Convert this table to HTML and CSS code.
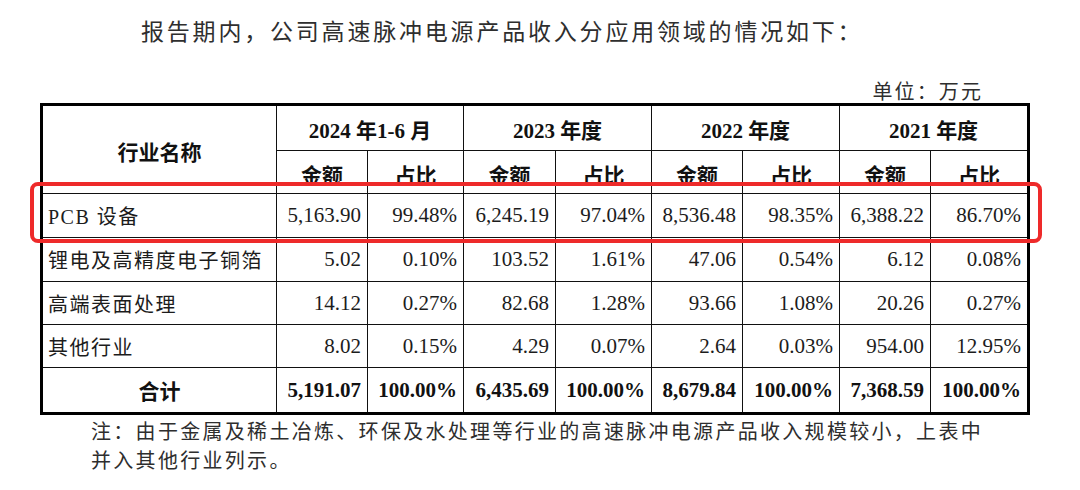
FILE: index.html
```html
<!DOCTYPE html>
<html lang="zh-CN">
<head>
<meta charset="utf-8">
<title>高速脉冲电源产品收入分应用领域</title>
<link rel="stylesheet" href="styles.css">
</head>
<body>
<div class="page">
  <p class="lead">报告期内，公司高速脉冲电源产品收入分应用领域的情况如下：</p>
  <div class="sheet">
    <p class="unit">单位：万元</p>
    <table class="data">
      <colgroup>
        <col class="c-name">
        <col class="c-91"><col class="c-96">
        <col class="c-92"><col class="c-96">
        <col class="c-91"><col class="c-97">
        <col class="c-91"><col class="c-96">
      </colgroup>
      <thead>
        <tr class="h1">
          <th rowspan="2">行业名称</th>
          <th colspan="2">2024 年1-6 月</th>
          <th colspan="2">2023 年度</th>
          <th colspan="2">2022 年度</th>
          <th colspan="2">2021 年度</th>
        </tr>
        <tr class="h2">
          <th>金额</th><th>占比</th>
          <th>金额</th><th>占比</th>
          <th>金额</th><th>占比</th>
          <th>金额</th><th>占比</th>
        </tr>
      </thead>
      <tbody>
        <tr class="r44">
          <td class="name">PCB 设备</td>
          <td>5,163.90</td><td>99.48%</td>
          <td>6,245.19</td><td>97.04%</td>
          <td>8,536.48</td><td>98.35%</td>
          <td>6,388.22</td><td>86.70%</td>
        </tr>
        <tr class="r44">
          <td class="name">锂电及高精度电子铜箔</td>
          <td>5.02</td><td>0.10%</td>
          <td>103.52</td><td>1.61%</td>
          <td>47.06</td><td>0.54%</td>
          <td>6.12</td><td>0.08%</td>
        </tr>
        <tr class="r43">
          <td class="name">高端表面处理</td>
          <td>14.12</td><td>0.27%</td>
          <td>82.68</td><td>1.28%</td>
          <td>93.66</td><td>1.08%</td>
          <td>20.26</td><td>0.27%</td>
        </tr>
        <tr class="r43">
          <td class="name">其他行业</td>
          <td>8.02</td><td>0.15%</td>
          <td>4.29</td><td>0.07%</td>
          <td>2.64</td><td>0.03%</td>
          <td>954.00</td><td>12.95%</td>
        </tr>
        <tr class="r44 total">
          <td class="name">合计</td>
          <td>5,191.07</td><td>100.00%</td>
          <td>6,435.69</td><td>100.00%</td>
          <td>8,679.84</td><td>100.00%</td>
          <td>7,368.59</td><td>100.00%</td>
        </tr>
      </tbody>
    </table>
    <p class="note">注：由于金属及稀土冶炼、环保及水处理等行业的高速脉冲电源产品收入规模较小，上表中并入其他行业列示。</p>
  </div>
  <div class="highlight"></div>
</div>
</body>
</html>
```

FILE: styles.css
```css
html, body {
  margin: 0;
  padding: 0;
  background: #ffffff;
}

body {
  font-family: "Liberation Serif", "Noto Sans CJK SC", serif;
  color: #1c1c1c;
}

.page {
  position: relative;
  width: 1080px;
  height: 490px;
  overflow: hidden;
}

.lead {
  margin: 0;
  padding: 15px 0 0 141px;
  font-family: "Noto Sans CJK SC", sans-serif;
  font-size: 23px;
  line-height: 30px;
  letter-spacing: 2.8px;
  color: #2e2e2e;
  white-space: nowrap;
}

.sheet {
  margin-left: 40px;
  width: 990px;
}

.unit {
  margin: 35px 0 0;
  height: 23px;
  padding-right: 47px;
  text-align: right;
  font-family: "Noto Sans CJK SC", sans-serif;
  font-size: 20px;
  line-height: 22px;
  letter-spacing: 2.1px;
  color: #2e2e2e;
}

.data {
  width: 990px;
  table-layout: fixed;
  border-collapse: separate;
  border-spacing: 0;
  border: 3px solid #000;
  font-size: 21px;
}

.c-name { width: 234px; }
.c-91 { width: 91px; }
.c-92 { width: 92px; }
.c-96 { width: 96px; }
.c-97 { width: 97px; }

.data th,
.data td {
  padding: 0;
  border-right: 1px solid #111;
  border-bottom: 1px solid #111;
  vertical-align: middle;
  white-space: nowrap;
  overflow: hidden;
}

.data tr > :last-child {
  border-right: 0;
}

.data tbody tr:last-child td {
  border-bottom: 0;
}

.data th {
  font-weight: 700;
  text-align: center;
  color: #111;
}

.h1 { height: 45px; }
.h1 th { padding-top: 2px; }
.h2 { height: 43px; }
.h2 th { padding-top: 4px; }
.r44 { height: 44px; }
.r43 { height: 43px; }

.data td {
  text-align: right;
  padding-right: 6px;
  color: #1c1c1c;
}

.data td.name {
  text-align: left;
  padding: 0 0 0 5px;
  font-size: 20px;
  letter-spacing: 1.5px;
}

.total td {
  font-weight: 700;
  color: #111;
}

.total td.name {
  text-align: center;
  padding: 0;
  font-size: 21px;
  letter-spacing: 0;
}

.note {
  margin: 1px 0 0;
  padding-left: 51px;
  width: 900px;
  font-family: "Noto Sans CJK SC", sans-serif;
  font-size: 20px;
  line-height: 29px;
  letter-spacing: 2.3px;
  color: #2e2e2e;
}

.highlight {
  position: absolute;
  left: 30px;
  top: 182px;
  width: 1012px;
  height: 61px;
  box-sizing: border-box;
  border: 4px solid #ee2a2a;
  border-radius: 8px;
  pointer-events: none;
}
```
